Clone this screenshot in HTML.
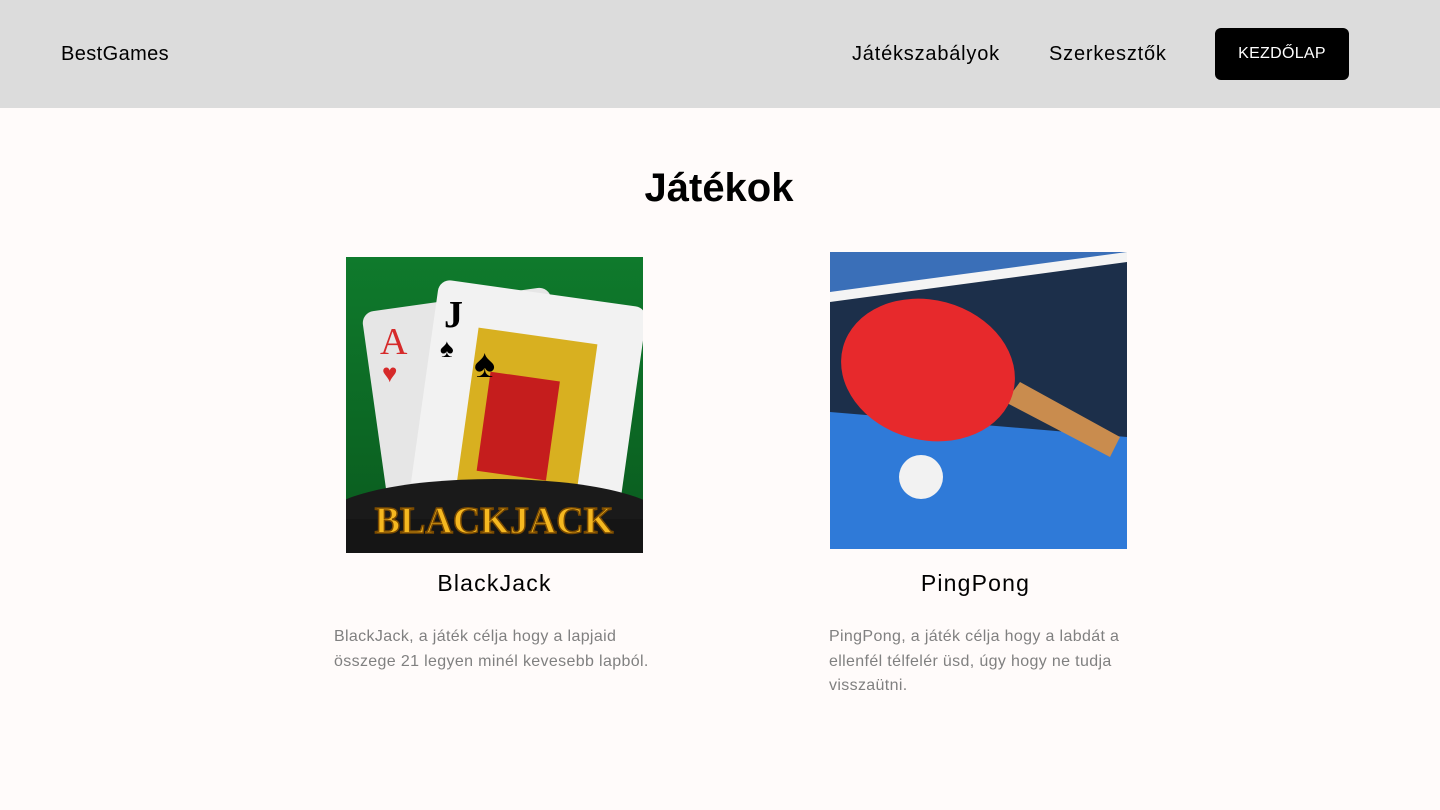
<!DOCTYPE html>
<html><head><meta charset="utf-8"><style>
*{margin:0;padding:0;box-sizing:border-box}
body{width:1440px;height:810px;background:#fffbfa;font-family:"Liberation Sans",sans-serif;color:#000;position:relative;overflow:hidden}
.hdr{position:absolute;left:0;top:0;width:1440px;height:108px;background:#dcdcdc}
.logo{position:absolute;left:61px;top:43px;font-size:20px;letter-spacing:0.4px}
.nav{position:absolute;top:43px;font-size:20px;letter-spacing:0.8px}
.btn{position:absolute;left:1215px;top:28px;width:134px;height:52px;background:#000;color:#fff;border-radius:6px;font-size:16px;text-align:center;line-height:52px;letter-spacing:0.3px}
h1{position:absolute;top:166px;width:100%;text-align:center;font-size:40px;font-weight:bold;left:-1px}
.t{position:absolute;font-size:23px;text-align:center;width:297px;letter-spacing:1.2px}
.d{position:absolute;font-size:16px;line-height:24.5px;color:#808080;width:340px;letter-spacing:0.35px}
</style></head><body>
<div class="hdr">
<div class="logo">BestGames</div>
<div class="nav" style="left:852px">Játékszabályok</div>
<div class="nav" style="left:1049px">Szerkesztők</div>
<div class="btn">KEZDŐLAP</div>
</div>
<h1>Játékok</h1>

<svg style="position:absolute;left:346px;top:257px" width="297" height="296" viewBox="0 0 297 296">
<defs><linearGradient id="g" x1="0" y1="0" x2="0" y2="1"><stop offset="0" stop-color="#0f7a2c"/><stop offset="1" stop-color="#0a5a1e"/></linearGradient></defs>
<rect width="297" height="296" fill="url(#g)"/>
<rect x="28" y="42" width="190" height="200" rx="12" fill="#e6e6e6" transform="rotate(-8 120 140)"/>
<text x="34" y="97" font-size="38" fill="#d62a2a" font-family="Liberation Serif">A</text>
<text x="36" y="125" font-size="26" fill="#d62a2a">♥</text>
<rect x="78" y="35" width="210" height="215" rx="12" fill="#f2f2f2" transform="rotate(8 180 140)"/>
<text x="98" y="70" font-size="38" font-weight="bold" font-family="Liberation Serif">J</text>
<text x="94" y="100" font-size="26">♠</text>
<rect x="122" y="78" width="120" height="160" fill="#d8b020" transform="rotate(8 180 150)"/>
<rect x="140" y="120" width="70" height="100" fill="#c51d1d" transform="rotate(8 180 150)"/>
<text x="128" y="120" font-size="40">♠</text>
<ellipse cx="148" cy="262" rx="170" ry="40" fill="#1a1a1a"/>
<rect x="0" y="262" width="297" height="34" fill="#151515"/>
<text x="148" y="276" font-size="38" font-weight="bold" text-anchor="middle" fill="#f5b820" stroke="#7a4a00" stroke-width="1.5" font-family="Liberation Serif">BLACKJACK</text>
</svg>

<svg style="position:absolute;left:830px;top:252px" width="297" height="297" viewBox="0 0 297 297">
<rect width="297" height="297" fill="#2f7ad8"/>
<rect width="297" height="40" fill="#3a6fb8"/>
<polygon points="0,45 297,8 297,185 0,160" fill="#1c2f4a"/>
<polygon points="0,40 297,0 297,10 0,50" fill="#f4f4f4"/>
<polygon points="175,150 190,130 290,185 280,205" fill="#c98c4e"/>
<ellipse cx="98" cy="118" rx="88" ry="70" fill="#e7292c" transform="rotate(15 98 118)"/>
<circle cx="91" cy="225" r="22" fill="#f2f2f2"/>
</svg>

<div class="t" style="left:346px;top:570px">BlackJack</div>
<div class="t" style="left:827px;top:570px">PingPong</div>
<div class="d" style="left:334px;top:625px">BlackJack, a játék célja hogy a lapjaid összege 21 legyen minél kevesebb lapból.</div>
<div class="d" style="left:829px;top:625px;width:305px">PingPong, a játék célja hogy a labdát a ellenfél télfelér üsd, úgy hogy ne tudja visszaütni.</div>
</body></html>
